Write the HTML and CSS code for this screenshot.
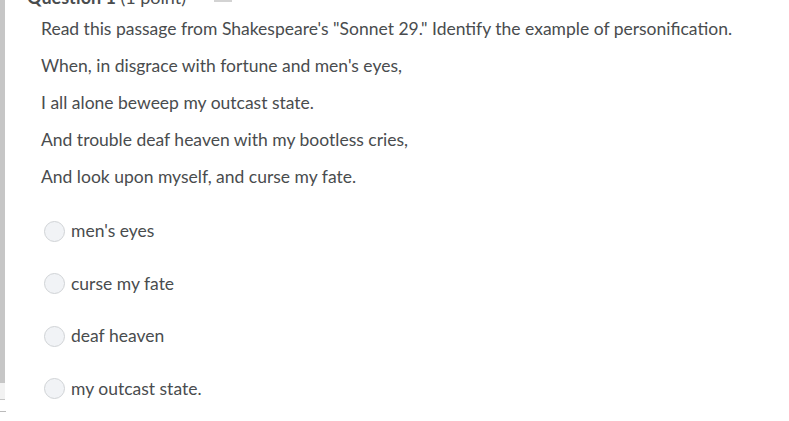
FILE: index.html
```html
<!DOCTYPE html>
<html>
<head>
<meta charset="utf-8">
<link rel="stylesheet" href="styles.css">
</head>
<body>
<div class="page">
  <div class="question">
    <div class="q-head">
      <h2 class="q-title">Question 1 <span class="pts">(1 point)</span></h2>
      <span class="q-flag"></span>
    </div>
    <p class="line">Read this passage from Shakespeare's "Sonnet 29." Identify the example of personification.</p>
    <p class="line">When, in disgrace with fortune and men's eyes,</p>
    <p class="line">I all alone beweep my outcast state.</p>
    <p class="line">And trouble deaf heaven with my bootless cries,</p>
    <p class="line">And look upon myself, and curse my fate.</p>
    <div class="options">
      <label class="opt"><span class="radio"></span><span>men's eyes</span></label>
      <label class="opt"><span class="radio"></span><span>curse my fate</span></label>
      <label class="opt"><span class="radio"></span><span>deaf heaven</span></label>
      <label class="opt"><span class="radio"></span><span>my outcast state.</span></label>
    </div>
  </div>
  <div class="q-tail"></div>
  <div class="rule"></div>
</div>
</body>
</html>
```

FILE: styles.css
```css
html, body {
  margin: 0;
  padding: 0;
  background: #ffffff;
}
body {
  font-family: Lato, "Open Sans", sans-serif;
  color: #494c4e;
  overflow: hidden;
}
.page {
  margin-top: -16px;
}
.question {
  border-left: 5px solid #c6c6c6;
  padding-left: 36px;
  width: 740px;
}
.q-head {
  display: flex;
  align-items: flex-start;
  height: 20px;
  margin-left: -14px;
}
.q-title {
  font-size: 18px;
  font-weight: 700;
  margin: 0;
  line-height: 26px;
}
.pts {
  font-weight: 400;
}
.q-flag {
  width: 18px;
  height: 18px;
  background: #d3d3d3;
  margin-left: 28px;
}
.line {
  font-size: 17.5px;
  line-height: 22px;
  margin: 14px 0 15px;
}
.options {
  display: flex;
  flex-direction: column;
  gap: 30.5px;
  margin-top: 32px;
  margin-bottom: -17px;
}
.opt {
  display: flex;
  align-items: center;
  gap: 6px;
  height: 22px;
  font-size: 17.5px;
  line-height: 22px;
  margin-left: 3px;
}
.radio {
  width: 19px;
  height: 19px;
  border: 1px solid #d0d3d6;
  border-radius: 50%;
  background: #f1f3f6;
}
.q-tail {
  height: 16px;
  width: 0;
  border-left: 5px solid #f2f2f2;
}
.rule {
  width: 6px;
  height: 1px;
  background: #bbb;
  margin-top: 12px;
}
```
